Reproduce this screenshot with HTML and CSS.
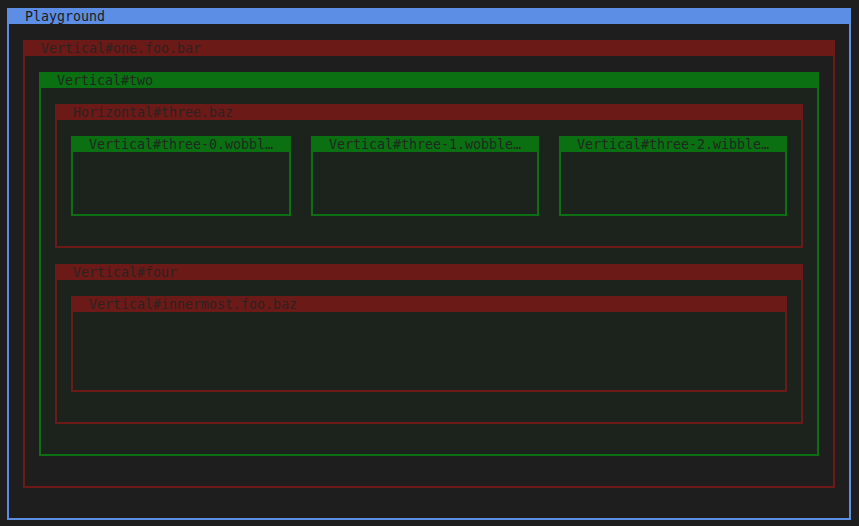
FILE: index.html
```html
<!DOCTYPE html>
<html>
<head>
<meta charset="utf-8">
<title>Playground</title>
<link rel="stylesheet" href="styles.css">
</head>
<body>
<div class="box blue screen">
  <div class="title">Playground</div>
  <div class="body">
    <div class="box red">
      <div class="title">Vertical#one.foo.bar</div>
      <div class="body">
        <div class="box green tint">
          <div class="title">Vertical#two</div>
          <div class="body stack">
            <div class="box red">
              <div class="title">Horizontal#three.baz</div>
              <div class="body row">
                <div class="box green leaf">
                  <div class="title">Vertical#three-0.wobbl…</div>
                  <div class="body"></div>
                </div>
                <div class="box green leaf">
                  <div class="title">Vertical#three-1.wobble…</div>
                  <div class="body"></div>
                </div>
                <div class="box green leaf">
                  <div class="title">Vertical#three-2.wibble…</div>
                  <div class="body"></div>
                </div>
              </div>
            </div>
            <div class="box red">
              <div class="title">Vertical#four</div>
              <div class="body">
                <div class="box red inner">
                  <div class="title">Vertical#innermost.foo.baz</div>
                  <div class="body"></div>
                </div>
              </div>
            </div>
          </div>
        </div>
      </div>
    </div>
  </div>
</div>
</body>
</html>
```
FILE: styles.css
```css
html, body {
  margin: 0;
  background: #1e1e1e;
}
body {
  padding: 8px 8px 6px 7px;
  font-family: "DejaVu Sans Mono", "Liberation Mono", monospace;
  font-size: 13.3px;
}
.box {
  display: flex;
  flex-direction: column;
  box-sizing: border-box;
}
.title {
  box-sizing: border-box;
  height: 16px;
  line-height: 16px;
  padding: 1px 18px 0 18px;
  white-space: nowrap;
  overflow: visible;
}
.body {
  flex: 1;
  border: 2px solid transparent;
  border-top: none;
  padding: 16px 14px 30px 14px;
  display: flex;
  flex-direction: column;
}
.screen {
  width: 844px;
  height: 512px;
}
.blue > .title { background: #5d8ee6; color: #1c1c1c; }
.blue > .body { border-color: #5d8ee6; background: #1e1e1e; }
.red > .title { background: #6b1a17; color: #2e2120; }
.red > .body { border-color: #6b1a17; }
.green > .title { background: #0a7012; color: #1d2a1d; }
.green > .body { border-color: #0a7012; }
.tint > .body { background: #1b231c; }
.stack { gap: 16px; }
.row {
  display: grid;
  grid-template-columns: 220px 228px 228px;
  column-gap: 20px;
}
.leaf { height: 80px; }
.leaf > .title { padding-right: 0; }
.leaf > .body { padding: 0; }
.inner { height: 96px; }
.inner > .body { padding: 0; }
```
